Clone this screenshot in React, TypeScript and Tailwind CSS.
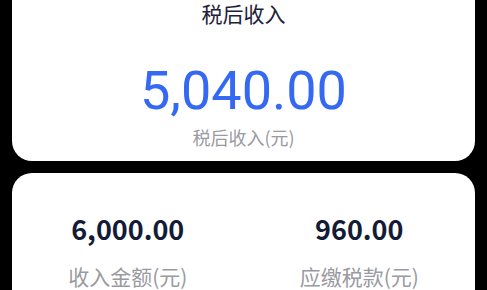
export default function App() {
  return (
    <div className="min-h-screen overflow-hidden bg-black px-3 font-['Noto_Sans_CJK_SC',sans-serif]">
      <div className="-mt-5">
        {/* 税后收入 */}
        <div className="flex flex-col items-center rounded-[20px] bg-white pt-5 pb-[11px]">
          <h2 className="text-[21px] leading-[26px] text-[#1c2238]">税后收入</h2>
          <div className="mt-[35px] font-['Roboto',sans-serif] text-[54px] leading-[60px] text-[#3569f3]">5,040.00</div>
          <div className="mt-[3px] text-[18px] leading-[26px] text-[#9a9aa2]">税后收入(元)</div>
        </div>

        {/* 收入 / 税款 */}
        <div className="mt-3 grid grid-cols-2 rounded-[20px] bg-white pt-9 pb-8">
          <div className="flex flex-col items-center">
            <div className="text-[27px] font-bold leading-[40px] text-[#141b36]">6,000.00</div>
            <div className="mt-[12px] text-[21px] leading-[30px] text-[#9a9aa2]">收入金额(元)</div>
          </div>
          <div className="flex flex-col items-center">
            <div className="text-[27px] font-bold leading-[40px] text-[#141b36]">960.00</div>
            <div className="mt-[12px] text-[21px] leading-[30px] text-[#9a9aa2]">应缴税款(元)</div>
          </div>
        </div>
      </div>
    </div>
  )
}
